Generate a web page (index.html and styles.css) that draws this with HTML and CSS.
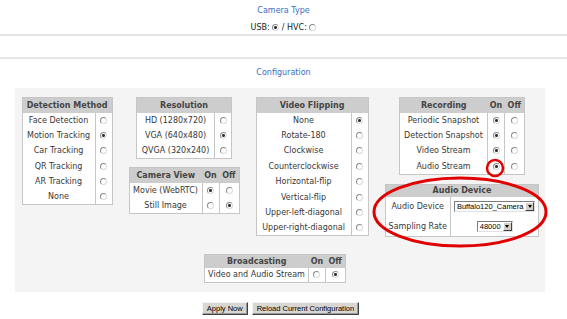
FILE: index.html
```html
<!DOCTYPE html>
<html lang="en">
<head>
    <meta charset="UTF-8">
    <meta name="viewport" content="width=device-width, initial-scale=1.0">
    <title>Camera Settings</title>

    <link rel="stylesheet" href="styles.css">

</head>
<body>

<div class="camera-type">
  <div class="section-title">Camera Type</div>
  <div class="usb-row">USB: <input type="radio" name="cam" checked> / HVC: <input type="radio" name="cam"></div>
</div>

<div class="divider"></div>

<div class="section-title config-title">Configuration</div>

<div class="config-panel">
  <div class="config-grid">

    <!-- column 1 -->
    <div class="col">
      <table class="opt t-det">
        <tr><th colspan="2">Detection Method</th></tr>
        <tr><td>Face Detection</td><td class="r"><input type="radio" name="det"></td></tr>
        <tr><td>Motion Tracking</td><td class="r"><input type="radio" name="det" checked></td></tr>
        <tr><td>Car Tracking</td><td class="r"><input type="radio" name="det"></td></tr>
        <tr><td>QR Tracking</td><td class="r"><input type="radio" name="det"></td></tr>
        <tr><td>AR Tracking</td><td class="r"><input type="radio" name="det"></td></tr>
        <tr><td>None</td><td class="r"><input type="radio" name="det"></td></tr>
      </table>
    </div>

    <!-- column 2 -->
    <div class="col">
      <table class="opt t-res">
        <tr><th colspan="2">Resolution</th></tr>
        <tr><td>HD (1280x720)</td><td class="r"><input type="radio" name="res"></td></tr>
        <tr><td>VGA (640x480)</td><td class="r"><input type="radio" name="res" checked></td></tr>
        <tr><td>QVGA (320x240)</td><td class="r"><input type="radio" name="res"></td></tr>
      </table>
      <table class="opt t-view">
        <tr><th>Camera View</th><th class="onoff">On</th><th class="onoff">Off</th></tr>
        <tr><td>Movie (WebRTC)</td><td class="r"><input type="radio" name="view1" checked></td><td class="r off"><input type="radio" name="view1"></td></tr>
        <tr><td>Still Image</td><td class="r"><input type="radio" name="view2"></td><td class="r off"><input type="radio" name="view2" checked></td></tr>
      </table>
    </div>

    <!-- column 3 -->
    <div class="col">
      <table class="opt t-flip">
        <tr><th colspan="2">Video Flipping</th></tr>
        <tr><td>None</td><td class="r"><input type="radio" name="flip" checked></td></tr>
        <tr><td>Rotate-180</td><td class="r"><input type="radio" name="flip"></td></tr>
        <tr><td>Clockwise</td><td class="r"><input type="radio" name="flip"></td></tr>
        <tr><td>Counterclockwise</td><td class="r"><input type="radio" name="flip"></td></tr>
        <tr><td>Horizontal-flip</td><td class="r"><input type="radio" name="flip"></td></tr>
        <tr><td>Vertical-flip</td><td class="r"><input type="radio" name="flip"></td></tr>
        <tr><td>Upper-left-diagonal</td><td class="r"><input type="radio" name="flip"></td></tr>
        <tr><td>Upper-right-diagonal</td><td class="r"><input type="radio" name="flip"></td></tr>
      </table>
    </div>

    <!-- column 4 -->
    <div class="col col-wide">
      <table class="opt t-rec">
        <tr><th>Recording</th><th class="onoff">On</th><th class="onoff">Off</th></tr>
        <tr><td>Periodic Snapshot</td><td class="r"><input type="radio" name="rec1" checked></td><td class="r off"><input type="radio" name="rec1"></td></tr>
        <tr><td>Detection Snapshot</td><td class="r"><input type="radio" name="rec2" checked></td><td class="r off"><input type="radio" name="rec2"></td></tr>
        <tr><td>Video Stream</td><td class="r"><input type="radio" name="rec3" checked></td><td class="r off"><input type="radio" name="rec3"></td></tr>
        <tr><td>Audio Stream</td><td class="r"><input type="radio" name="rec4" checked></td><td class="r off"><input type="radio" name="rec4"></td></tr>
      </table>
      <table class="opt audio">
        <tr><th colspan="2">Audio Device</th></tr>
        <tr>
          <td>Audio Device</td>
          <td class="sel"><span class="select"><span class="val">Buffalo120_Camera</span><span class="arrow"></span></span></td>
        </tr>
        <tr>
          <td>Sampling Rate</td>
          <td class="sel"><span class="select"><span class="val">48000</span><span class="arrow"></span></span></td>
        </tr>
      </table>
    </div>

  </div>

  <table class="opt broadcast">
    <tr><th>Broadcasting</th><th class="onoff">On</th><th class="onoff">Off</th></tr>
    <tr><td>Video and Audio Stream</td><td class="r"><input type="radio" name="bc"></td><td class="r off"><input type="radio" name="bc" checked></td></tr>
  </table>
</div>

<div class="buttons">
  <button class="btn">Apply Now</button>
  <button class="btn">Reload Current Configuration</button>
</div>

<!-- red annotation marks drawn over the screenshot -->
<svg class="marks" width="567" height="319" viewBox="0 0 567 319">
  <circle cx="495" cy="168" r="8" fill="none" stroke="#e00000" stroke-width="2.5"/>
  <ellipse cx="460" cy="212" rx="86" ry="34" fill="none" stroke="#e00000" stroke-width="3"/>
</svg>

</body>
</html>
```

FILE: styles.css
```css
* {
  box-sizing: border-box;
}

body {
  margin: 0;
  padding: 0;
  position: relative;
  width: 567px;
  height: 319px;
  overflow: hidden;
  background: #ffffff;
  font-family: "DejaVu Sans", Verdana, sans-serif;
  font-size: 8px;
  color: #383838;
}

.section-title {
  text-align: center;
  color: #3a6fc4;
  line-height: 14px;
}

.camera-type {
  padding-top: 4px;
}

.usb-row {
  margin-top: 4px;
  line-height: 12px;
  text-align: center;
  color: #222;
}

.usb-row input {
  margin: 0 3px 2px 2px;
}

.divider {
  height: 25px;
  border-top: 2px solid #e6e6e6;
  border-bottom: 2px solid #e6e6e6;
}

.config-title {
  margin-top: 7px;
}

.config-panel {
  margin: 8px 0 0 15px;
  width: 530px;
  height: 204px;
  padding: 9px 8px 0 9px;
  background: #f4f4f4;
  display: flex;
  flex-direction: column;
  align-items: center;
}

.config-grid {
  display: flex;
  align-items: flex-start;
  gap: 16px;
}

.col {
  display: flex;
  flex-direction: column;
  align-items: center;
  gap: 8px;
}

.col-wide {
  gap: 9px;
}

/* option tables */
.opt {
  border-collapse: collapse;
  border: 1px solid #c6c6c6;
  background: #fff;
}

.t-det { width: 91px; }
.t-res { width: 96px; }
.t-view { width: 111px; }
.t-flip { width: 113px; }
.t-rec { width: 126px; }

.opt th {
  background: #cdcdcd;
  color: #454545;
  font-weight: bold;
  height: 15px;
  padding: 0 3px;
  white-space: nowrap;
}

.opt th.onoff {
  padding: 0 2px;
}

.opt td {
  height: 15.4px;
  padding: 0 3px;
  text-align: center;
  white-space: nowrap;
}

.opt td + td {
  border-left: 1px solid #c6c6c6;
}

.opt td.r {
  width: 17px;
  padding: 0 2px;
}

.opt td.off {
  width: 20px;
}

.audio th {
  height: 13px;
}

.audio td {
  height: 19.5px;
}

.audio td.sel {
  padding: 0 3px;
}

.broadcast {
  margin: 17px 11px 0 0;
}

.broadcast th,
.broadcast td {
  height: 14px;
}

/* classic radio */
input[type="radio"] {
  appearance: none;
  -webkit-appearance: none;
  width: 7px;
  height: 7px;
  margin: 0;
  border: 1px solid;
  border-color: #8a8a8a #dadada #dadada #8a8a8a;
  border-radius: 50%;
  background: #fff;
  vertical-align: middle;
}

input[type="radio"]:checked {
  background: radial-gradient(circle, #333 0, #333 1.2px, #fff 1.8px);
}

/* classic drop-down */
.select {
  display: inline-flex;
  align-items: center;
  height: 11px;
  border: 1px solid;
  border-color: #7c7c7c #e0e0e0 #e0e0e0 #7c7c7c;
  background: #fff;
  vertical-align: middle;
  font-family: "Liberation Sans", Arial, sans-serif;
  font-size: 7.5px;
  color: #000;
}

.select .val {
  padding: 0 2px 0 2px;
  line-height: 9px;
}

.select .arrow {
  display: inline-flex;
  align-items: center;
  justify-content: center;
  width: 9px;
  height: 9px;
  background: #d4d0c8;
  border: 1px solid;
  border-color: #fff #404040 #404040 #fff;
}

.select .arrow::after {
  content: "";
  border-left: 2.5px solid transparent;
  border-right: 2.5px solid transparent;
  border-top: 3px solid #000;
}

.buttons {
  display: flex;
  justify-content: center;
  gap: 4px;
  margin-top: 10px;
  padding-right: 6px;
}

.btn {
  height: 13px;
  padding: 0 4px;
  font-family: "Liberation Sans", Arial, sans-serif;
  font-size: 7.5px;
  color: #000;
  background: #d8d6d0;
  border: 1px solid;
  border-color: #f4f4f4 #404040 #404040 #f4f4f4;
  box-shadow: inset -1px -1px 0 #9a9a9a;
  line-height: 10px;
}

.marks {
  position: absolute;
  top: 0;
  left: 0;
  pointer-events: none;
}
```
